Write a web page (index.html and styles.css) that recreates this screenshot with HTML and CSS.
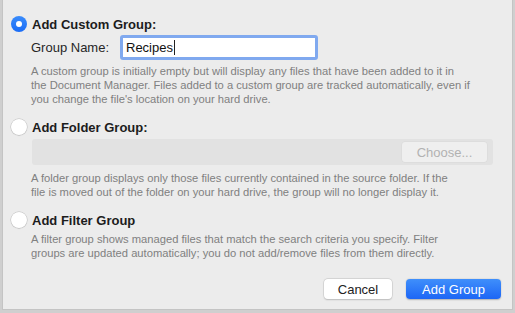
FILE: index.html
```html
<!DOCTYPE html>
<html>
<head>
<link rel="stylesheet" href="styles.css">
</head>
<body>

<div class="sheet">
  <div class="option">
    <span class="radio on"></span>
    <span class="title">Add Custom Group:</span>
  </div>
  <div class="name-row">
    <span class="name-label">Group Name:</span>
    <div class="field focus">Recipes<span class="caret"></span></div>
  </div>
  <p class="desc first">A custom group is initially empty but will display any files that have been added to it in<br>the Document Manager. Files added to a custom group are tracked automatically, even if<br>you change the file's location on your hard drive.</p>

  <div class="option">
    <span class="radio"></span>
    <span class="title">Add Folder Group:</span>
  </div>
  <div class="path">
    <button class="choose">Choose...</button>
  </div>
  <p class="desc">A folder group displays only those files currently contained in the source folder. If the<br>file is moved out of the folder on your hard drive, the group will no longer display it.</p>

  <div class="option">
    <span class="radio"></span>
    <span class="title">Add Filter Group</span>
  </div>
  <p class="desc tight">A filter group shows managed files that match the search criteria you specify. Filter<br>groups are updated automatically; you do not add/remove files from them directly.</p>

  <div class="buttons">
    <button class="btn">Cancel</button>
    <button class="btn primary">Add Group</button>
  </div>
</div>

</body>
</html>
```

FILE: styles.css
```css
* {box-sizing: border-box;}

body {
  margin: 0;
  background: #cfcfcf;
  font-family: "Liberation Sans", Arial, sans-serif;
  height: 313px;
  overflow: hidden;
}

.sheet {
  margin-left: 2px;
  width: 511px;
  height: 310px;
  background: #ececec;
  border: 1px solid #c4c4c4;
  border-top: none;
  padding: 16px 0 0 8px;
  display: flex;
  flex-direction: column;
}

.option {
  display: flex;
  align-items: center;
  height: 16px;
}

.option + .option,
.desc + .option {
  margin-top: 13px;
}

.radio {
  width: 16px;
  height: 16px;
  border-radius: 50%;
  background: #fff;
  box-shadow: 0 0 0 0.5px #bdbdbd, 0 0.5px 1px rgba(0,0,0,0.2);
  margin-right: 5px;
  display: flex;
  align-items: center;
  justify-content: center;
}

.radio.on {
  background: linear-gradient(#3a8cfb, #1a6cf6);
  box-shadow: none;
}

.radio.on::after {
  content: "";
  width: 6px;
  height: 6px;
  border-radius: 50%;
  background: #fff;
}

.title {
  font-size: 13px;
  font-weight: bold;
  color: #1c1c1c;
}

.name-row {
  display: flex;
  align-items: center;
  margin: 3px 0 0 20px;
}

.name-label {
  font-size: 13px;
  color: #262626;
  width: 89px;
}

.field {
  width: 198px;
  height: 25px;
  background: #fff;
  font-size: 13px;
  color: #111;
  padding: 4px 0 0 6px;
  display: flex;
  align-items: flex-start;
}

.field.focus {
  border: 3px solid #80a9ef;
  border-radius: 3px;
  padding: 2px 0 0 3px;
}

.caret {
  width: 1px;
  height: 15px;
  background: #222;
  margin-left: 1px;
}

.desc {
  margin: 4px 0 0 20px;
  font-size: 11.2px;
  line-height: 14px;
  color: #808080;
}

.desc.first {
  margin-top: 4px;
}

.path {
  margin: 4px 0 0 21px;
  width: 461px;
  height: 26px;
  background: #e2e2e2;
  border-radius: 3px;
  display: flex;
  justify-content: flex-end;
  align-items: center;
  padding-right: 6px;
}

.choose {
  width: 85px;
  height: 20px;
  border: none;
  border-radius: 3px;
  background: #efefef;
  box-shadow: 0 0 0 0.5px #d8d8d8;
  color: #b2b2b2;
  font-family: inherit;
  font-size: 13px;
  padding: 0;
}

.path + .desc {
  margin-top: 6px;
}

.desc.tight {
  margin-top: 4px;
}

.buttons {
  display: flex;
  justify-content: flex-end;
  margin: 19px 11px 0 0;
  gap: 14px;
}

.btn {
  height: 20px;
  border: none;
  border-radius: 4px;
  background: #fff;
  box-shadow: 0 0 0 0.5px #c6c6c6, 0 0.5px 1.5px rgba(0,0,0,0.22);
  font-family: inherit;
  font-size: 13px;
  color: #222;
  width: 68px;
  padding: 0;
}

.btn.primary {
  width: 95px;
  background: linear-gradient(#3f8ffb, #1d66f5);
  color: #fff;
  box-shadow: 0 0.5px 1.5px rgba(0,0,0,0.25);
}
```
